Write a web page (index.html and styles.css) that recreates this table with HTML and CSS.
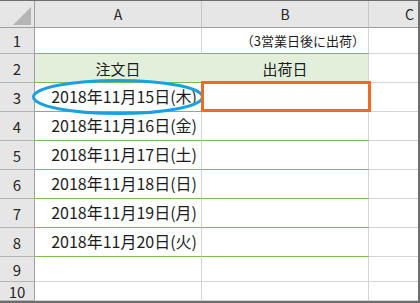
FILE: index.html
```html
<!DOCTYPE html>
<html lang="ja">
  <head>
    <meta charset="UTF-8" />
    <title>出荷日</title>
    <link rel="stylesheet" href="styles.css">
  </head>
  <body>
    <div class="sheet">
      <div class="grid">
        <!-- column headers -->
        <div class="corner">
          <svg width="20" height="20" viewBox="0 0 20 20"><polygon points="19,1 19,19 1,19" fill="#b5b5b5"/></svg>
        </div>
        <div class="colhead">A</div>
        <div class="colhead">B</div>
        <div class="colhead">C</div>

        <div class="rowhead r1">1</div>
        <div class="cell r1 edge"></div>
        <div class="cell r1 edge note">（3営業日後に出荷）</div>
        <div class="cell r1"></div>

        <div class="rowhead">2</div>
        <div class="cell title">注文日</div>
        <div class="cell title">出荷日</div>
        <div class="cell"></div>

        <div class="rowhead">3</div>
        <div class="cell list date">2018年11月15日(木)</div>
        <div class="cell list"></div>
        <div class="cell"></div>

        <div class="rowhead">4</div>
        <div class="cell list date">2018年11月16日(金)</div>
        <div class="cell list"></div>
        <div class="cell"></div>

        <div class="rowhead">5</div>
        <div class="cell list date">2018年11月17日(土)</div>
        <div class="cell list"></div>
        <div class="cell"></div>

        <div class="rowhead">6</div>
        <div class="cell list date">2018年11月18日(日)</div>
        <div class="cell list"></div>
        <div class="cell"></div>

        <div class="rowhead">7</div>
        <div class="cell list date">2018年11月19日(月)</div>
        <div class="cell list"></div>
        <div class="cell"></div>

        <div class="rowhead">8</div>
        <div class="cell list date">2018年11月20日(火)</div>
        <div class="cell list"></div>
        <div class="cell"></div>

        <div class="rowhead r9">9</div>
        <div class="cell r9"></div>
        <div class="cell r9"></div>
        <div class="cell r9"></div>

        <div class="rowhead r10">10</div>
        <div class="cell r10"></div>
        <div class="cell r10"></div>
        <div class="cell r10"></div>
      </div>

      <!-- markers drawn over the cells -->
      <svg class="ring" width="176" height="38" viewBox="0 0 176 38">
        <ellipse cx="88" cy="19" rx="84.5" ry="16.5" fill="none" stroke="#1ba1e2" stroke-width="3"/>
      </svg>
      <div class="target"></div>
    </div>
  </body>
</html>
```

FILE: styles.css
```css
* {
  padding: 0;
  margin: 0;
  box-sizing: border-box;
}
html {
  font-family: 'Noto Sans CJK JP', sans-serif;
  color: #1c1c1c;
  background-color: #fff;
}
body {
  width: 420px;
  height: 303px;
  overflow: hidden;
}
.sheet {
  position: relative;
  width: 420px;
  height: 303px;
  overflow: hidden;
  border-top: 1px solid #6d6d6d;
  border-right: 2px solid #6d6d6d;
  border-bottom: 2px solid #6d6d6d;
}
.grid {
  display: grid;
  grid-template-columns: 35px 167px 167px 82px;
  grid-template-rows: 27px 26px repeat(7, 29px) 25px 19px;
}
.corner,
.colhead,
.rowhead {
  background-color: #e6e6e6;
  color: #262626;
  font-size: 14px;
}
.corner {
  display: flex;
  align-items: flex-start;
  justify-content: flex-end;
  padding: 5px 2px 0 0;
  border-right: 1px solid #9f9f9f;
  border-bottom: 1px solid #9f9f9f;
}
.colhead {
  display: flex;
  align-items: center;
  justify-content: center;
  border-right: 1px solid #c6c6c6;
  border-bottom: 1px solid #9f9f9f;
}
.rowhead {
  display: flex;
  align-items: center;
  justify-content: center;
  font-size: 15px;
  border-right: 1px solid #9f9f9f;
  border-bottom: 1px solid #b4b4b4;
}
.cell {
  display: flex;
  align-items: center;
  border-right: 1px solid #d4d4d4;
  border-bottom: 1px solid #d4d4d4;
  font-size: 15px;
  white-space: nowrap;
}
.edge,
.list {
  border-bottom-color: #7dbd4f;
}
.note {
  justify-content: flex-end;
  font-size: 13px;
  padding-right: 3px;
}
.title {
  justify-content: center;
  background-color: #e2efda;
  border-right-color: #e2efda;
  border-bottom-color: #7dbd4f;
}
.title + .title {
  border-right-color: #d4d4d4;
}
.date {
  justify-content: flex-end;
  padding: 0 4px 2px 0;
  font-size: 16px;
}
.ring {
  position: absolute;
  left: 30px;
  top: 77px;
}
.target {
  position: absolute;
  left: 201px;
  top: 80px;
  width: 170px;
  height: 31px;
  border: 3px solid #f26a22;
}
```
